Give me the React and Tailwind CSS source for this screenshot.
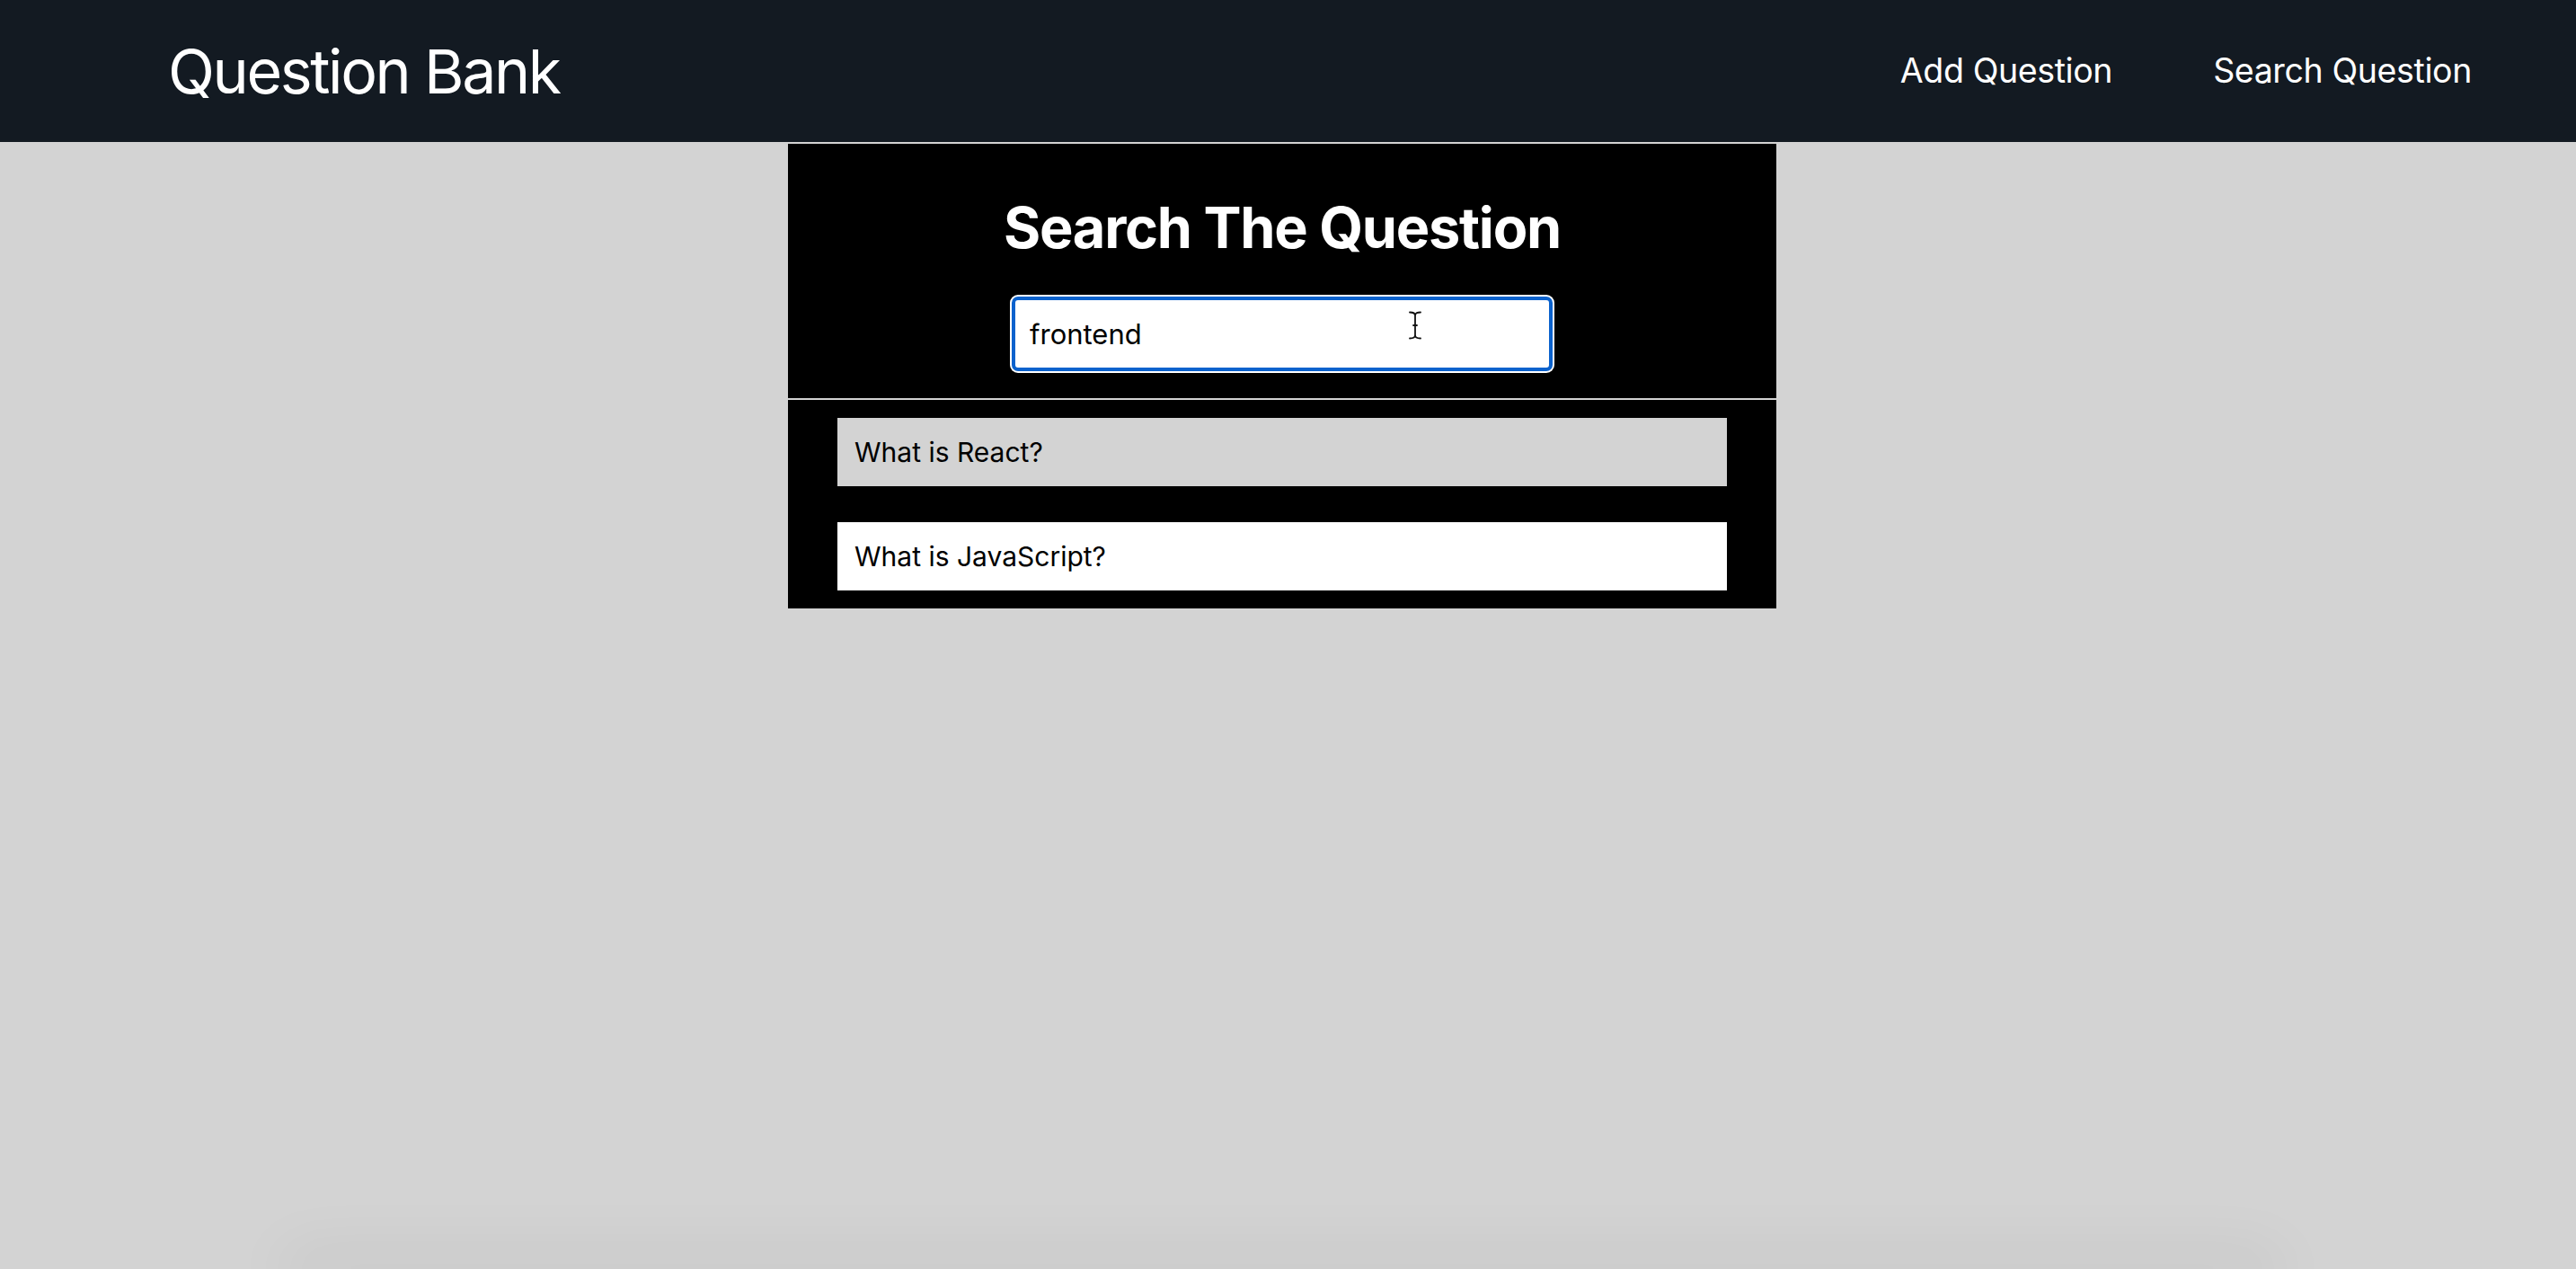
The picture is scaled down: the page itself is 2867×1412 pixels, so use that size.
import { useState } from "react";

const questions = [
  { id: 1, text: "What is React?" },
  { id: 2, text: "What is JavaScript?" },
];

const font = { fontFamily: "Inter, 'Noto Sans', Arial, sans-serif" };

function IBeam() {
  return (
    <svg
      width="16"
      height="34"
      viewBox="0 0 16 34"
      className="absolute left-[443px] top-[17px] pointer-events-none"
    >
      <path
        d="M2 2.5 C5 2.5 8 3 8 6 C8 3 11 2.5 14 2.5 M8 6 V28 M2 31.5 C5 31.5 8 31 8 28 C8 31 11 31.5 14 31.5 M6 17 H10"
        fill="none"
        stroke="#fff"
        strokeWidth="4"
        strokeLinecap="round"
      />
      <path
        d="M2 2.5 C5 2.5 8 3 8 6 C8 3 11 2.5 14 2.5 M8 6 V28 M2 31.5 C5 31.5 8 31 8 28 C8 31 11 31.5 14 31.5 M6 17 H10"
        fill="none"
        stroke="#111"
        strokeWidth="1.8"
        strokeLinecap="round"
      />
    </svg>
  );
}

export default function App() {
  const [query, setQuery] = useState("frontend");

  return (
    <div
      className="h-[1412px] overflow-hidden flex flex-col bg-[#d3d3d3]"
      style={font}
    >
      {/* Navbar */}
      <header className="h-[158px] shrink-0 bg-[#131a22] flex items-center justify-between pl-[187px] pr-[116px] text-white">
        <a className="text-[68px] font-normal tracking-[-0.035em] leading-none">
          Question Bank
        </a>
        <nav className="flex items-center gap-[112px] text-[37.5px] leading-none tracking-[-0.01em]">
          <a>Add Question</a>
          <a>Search Question</a>
        </nav>
      </header>

      {/* Search card */}
      <main className="flex justify-center pr-[13px] pt-[2px]">
        <div className="w-[1100px] flex flex-col gap-[2px]">
          <section className="bg-black flex flex-col items-center pt-[62px] pb-[28px]">
            <h1 className="text-white text-[63px] font-bold leading-none tracking-[-0.02em]">
              Search The Question
            </h1>
            <div className="relative mt-[43px] rounded-[9px] bg-white p-[2px]">
              <input
                value={query}
                onChange={(e) => setQuery(e.target.value)}
                className="w-[602px] h-[83px] rounded-[7px] border-[4px] border-[#0b62cd] bg-white px-[16px] text-[31px] text-black outline-none"
              />
              <IBeam />
            </div>
          </section>

          <section className="bg-black flex flex-col gap-[40px] px-[55px] py-[20px]">
            {questions.map((q, i) => (
              <div
                key={q.id}
                className={
                  i === 0
                    ? "h-[76px] flex items-center px-[19px] bg-[#d3d3d3] text-black text-[30px]"
                    : "h-[76px] flex items-center px-[19px] bg-white text-black text-[30px]"
                }
              >
                {q.text}
              </div>
            ))}
          </section>
        </div>
      </main>

      <div className="mt-auto h-0 shrink-0 flex justify-center pr-[13px]">
        <div className="w-[2200px] h-0 shadow-[0_0_70px_10px_rgba(0,0,0,0.12)]" />
      </div>
    </div>
  );
}
